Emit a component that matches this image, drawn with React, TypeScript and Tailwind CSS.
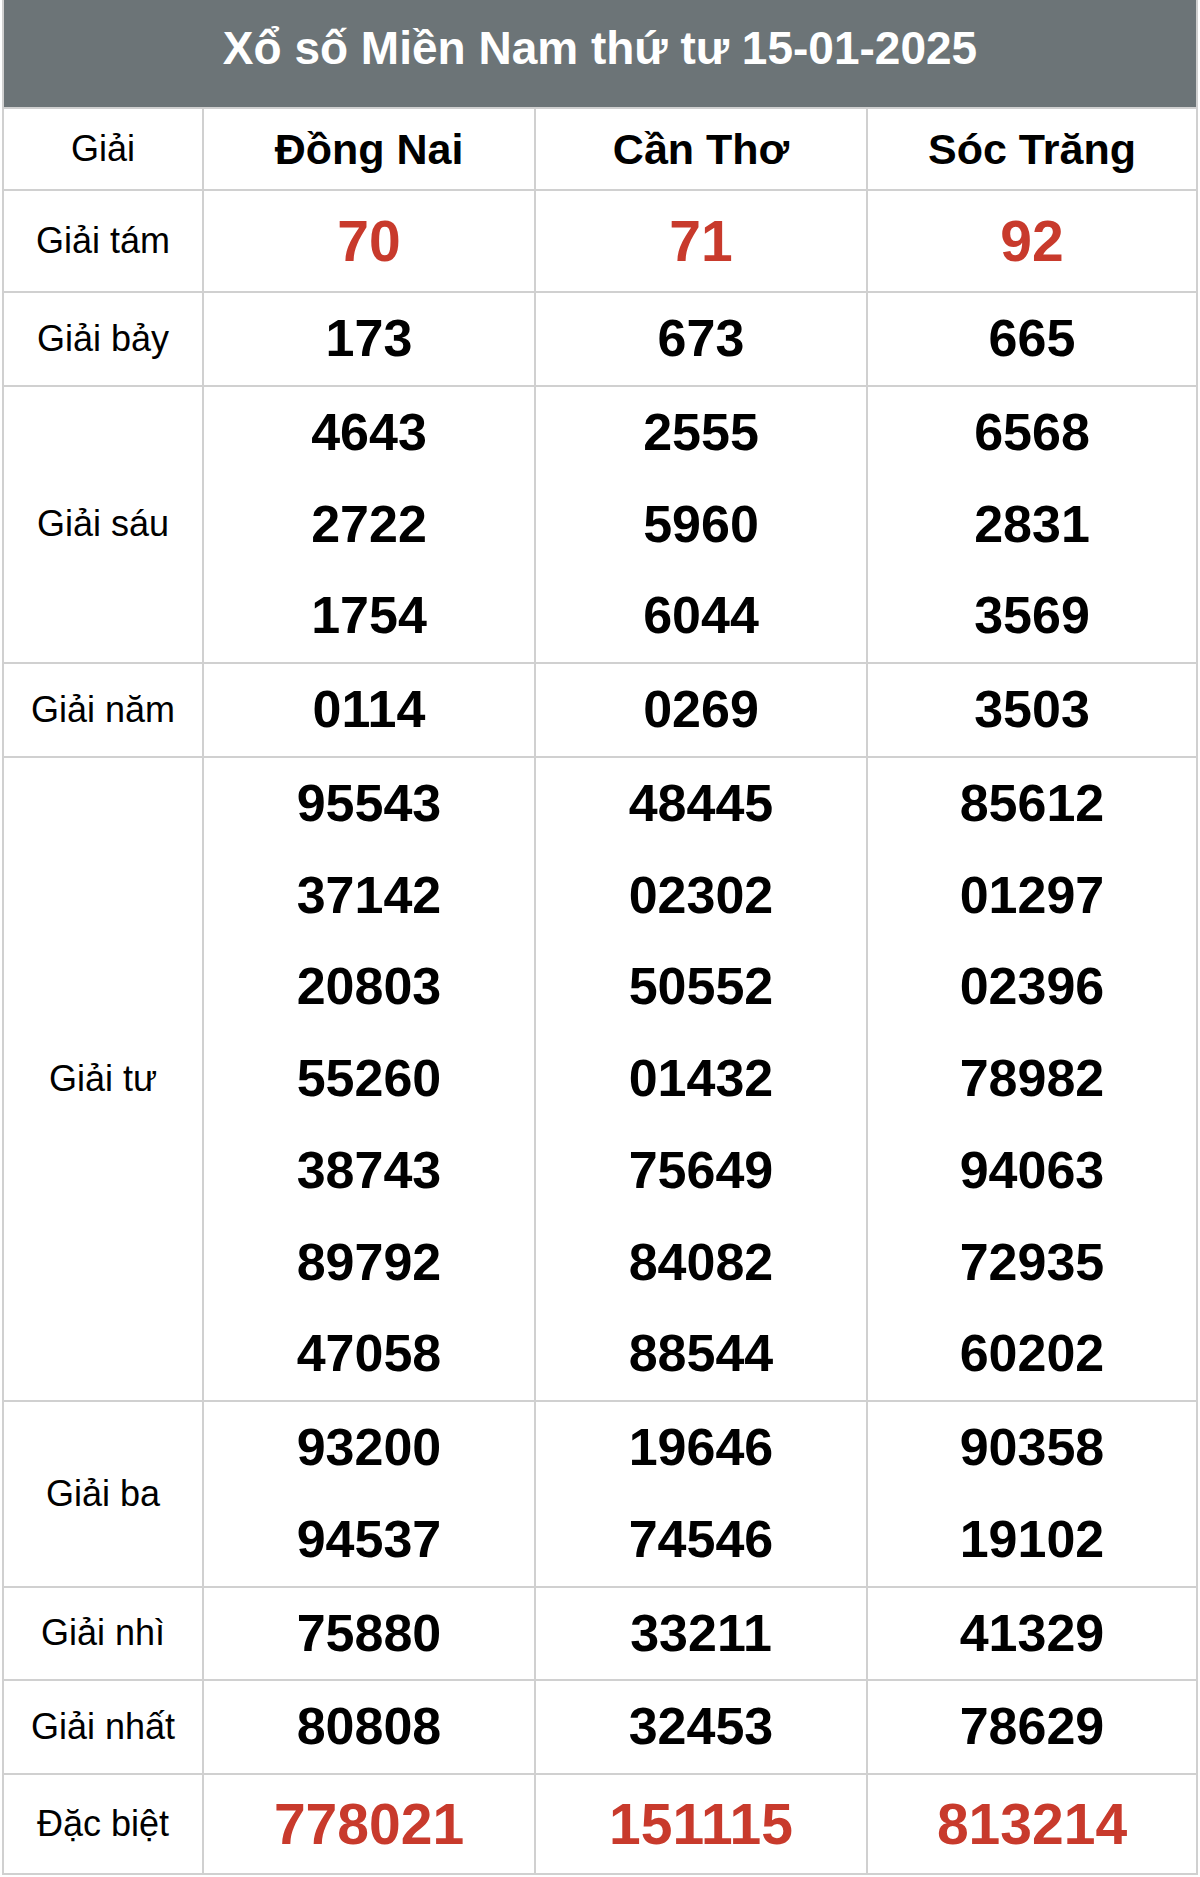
const PROVINCES = ["Đồng Nai", "Cần Thơ", "Sóc Trăng"]

type Prize = {
  label: string
  values: string[][]
  red?: boolean
  rowClass?: string
}

const PRIZES: Prize[] = [
  { label: "Giải tám", values: [["70"], ["71"], ["92"]], red: true, rowClass: "h-[100px]" },
  { label: "Giải bảy", values: [["173"], ["673"], ["665"]] },
  {
    label: "Giải sáu",
    values: [
      ["4643", "2722", "1754"],
      ["2555", "5960", "6044"],
      ["6568", "2831", "3569"],
    ],
  },
  { label: "Giải năm", values: [["0114"], ["0269"], ["3503"]] },
  {
    label: "Giải tư",
    values: [
      ["95543", "37142", "20803", "55260", "38743", "89792", "47058"],
      ["48445", "02302", "50552", "01432", "75649", "84082", "88544"],
      ["85612", "01297", "02396", "78982", "94063", "72935", "60202"],
    ],
  },
  {
    label: "Giải ba",
    values: [
      ["93200", "94537"],
      ["19646", "74546"],
      ["90358", "19102"],
    ],
  },
  { label: "Giải nhì", values: [["75880"], ["33211"], ["41329"]] },
  { label: "Giải nhất", values: [["80808"], ["32453"], ["78629"]] },
  { label: "Đặc biệt", values: [["778021"], ["151115"], ["813214"]], red: true, rowClass: "h-[98px]" },
]

export default function App() {
  return (
    <div className="min-h-screen bg-white px-[2px] pb-[2px] font-['Liberation_Sans',Arial,sans-serif]">
      <div className="grid grid-cols-[198px_330px_330px_1fr] gap-[2px] bg-[#d0d0d0] px-[2px] pb-[2px]">
        {/* Title bar */}
        <div className="col-span-4 flex h-[107px] items-center justify-center bg-[#6c7477] pb-[12px]">
          <h1 className="text-[46px] font-bold leading-none text-white">
            Xổ số Miền Nam thứ tư 15-01-2025
          </h1>
        </div>

        {/* Province header */}
        <div className="flex h-[80px] items-center justify-center bg-white text-[36px] text-black">
          Giải
        </div>
        {PROVINCES.map((p) => (
          <div
            key={p}
            className="flex h-[80px] items-center justify-center bg-white text-[43px] font-bold text-black"
          >
            {p}
          </div>
        ))}

        {/* Prize rows */}
        {PRIZES.map((prize) => (
          <PrizeRow key={prize.label} prize={prize} />
        ))}
      </div>
    </div>
  )
}

function PrizeRow({ prize }: { prize: Prize }) {
  return (
    <>
      <div
        className={`flex items-center justify-center bg-white text-[36px] text-black ${prize.rowClass ?? ""}`}
      >
        {prize.label}
      </div>
      {prize.values.map((col, i) => (
        <div
          key={i}
          className={`flex flex-col items-center justify-center bg-white font-bold ${prize.rowClass ?? ""}`}
        >
          {col.map((n) => (
            <span
              key={n}
              className={
                prize.red
                  ? "text-[57px] leading-none text-[#c83a2c]"
                  : "text-[52px] leading-[91.75px] text-black"
              }
            >
              {n}
            </span>
          ))}
        </div>
      ))}
    </>
  )
}
